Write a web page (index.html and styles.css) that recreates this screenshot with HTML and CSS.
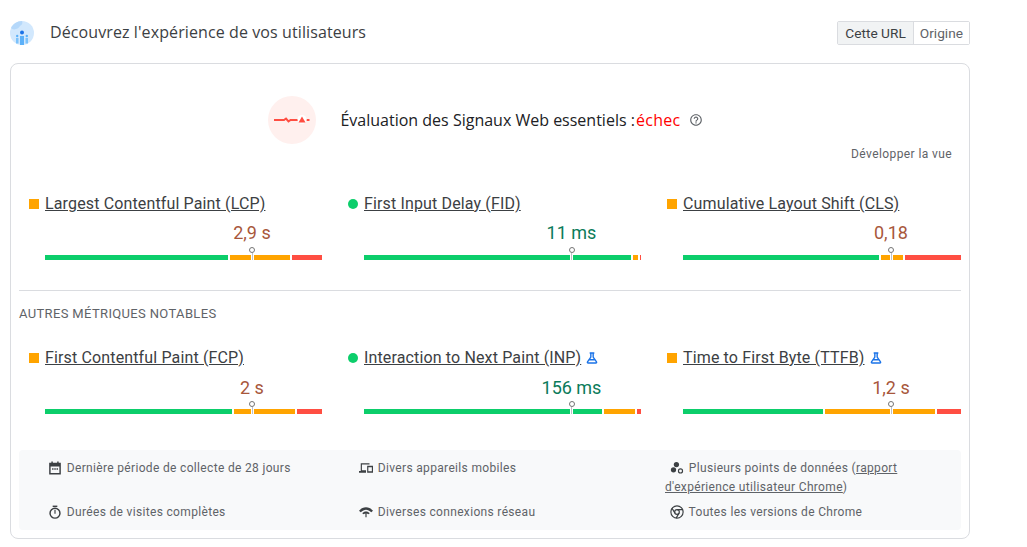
FILE: index.html
```html
<!doctype html>
<html lang="en">
    <head>
        <meta charset="UTF-8" />
        <meta name="viewport" content="width=device-width, initial-scale=1.0" />
        <title>Découvrez l'expérience de vos utilisateurs</title>
        <link rel="stylesheet" href="styles.css">
    </head>
    <body>
        <div class="container">
            <div class="header">
                <div class="header-title">
                    <svg class="logo" viewBox="0 0 24 24">
                        <circle cx="12" cy="12" r="12" fill="#d2e8fd" />
                        <path d="M1 7C3 3 7 0 12 0c1 2 0 4-2 5-1 2-3 3-4 3-2 1-4 0-5-1z" fill="#b5d8fa" />
                        <circle cx="12" cy="11.500" r="2" fill="#1a73e8" />
                        <rect x="10" y="15" width="4" height="9" fill="#5cb1f9" />
                        <rect x="6" y="17" width="2.500" height="5.500" fill="#7cc2fb" />
                        <rect x="15.500" y="17" width="2.500" height="5.500" fill="#7cc2fb" />
                        <circle cx="7.200" cy="15" r="1.200" fill="#5cb1f9" />
                        <circle cx="16.800" cy="15" r="1.200" fill="#5cb1f9" />
                    </svg>
                    <h1>Découvrez l'expérience de vos utilisateurs</h1>
                </div>
                <div class="toggle">
                    <button class="active">Cette URL</button>
                    <button>Origine</button>
                </div>
            </div>

            <div class="card">
                <div class="verdict">
                    <svg class="verdict-icon" viewBox="0 0 48 48">
                        <circle cx="24" cy="24" r="24" fill="#fff0ee" />
                        <path d="M6 24h10l2-1.500 2.500 3 2-1.500h8.500M38.500 24h3" fill="none" stroke="#ff4e42" stroke-width="2" />
                        <circle cx="34" cy="23.500" r="4.500" fill="#fff" />
                        <path d="M30.500 26.500l3.500-6 3.500 6z" fill="#ff4e42" />
                    </svg>
                    <h2>Évaluation des Signaux Web essentiels :<span class="fail">échec</span></h2>
                    <svg class="help" viewBox="0 0 24 24">
                        <path d="M11 18h2v-2h-2v2zm1-16C6.480 2 2 6.480 2 12s4.480 10 10 10 10-4.480 10-10S17.520 2 12 2zm0 18c-4.410 0-8-3.590-8-8s3.590-8 8-8 8 3.590 8 8-3.590 8-8 8zm0-14c-2.210 0-4 1.790-4 4h2c0-1.100.900-2 2-2s2 .900 2 2c0 2-3 1.750-3 5h2c0-2.250 3-2.500 3-5 0-2.210-1.790-4-4-4z" fill="#5f6368" />
                    </svg>
                </div>
                <div class="expand">Développer la vue</div>

                <div class="metrics">
                    <div class="metric" style="--pos: 0.747">
                        <div class="metric-name"><span class="marker average"></span><a href="#">Largest Contentful Paint (LCP)</a></div>
                        <div class="value average-text">2,9 s</div>
                        <div class="bar">
                            <span class="good" style="flex: 183"></span>
                            <span class="medium" style="flex: 60"></span>
                            <span class="poor" style="flex: 30"></span>
                            <i class="pointer"></i>
                        </div>
                    </div>
                    <div class="metric" style="--pos: 0.749">
                        <div class="metric-name"><span class="marker pass"></span><a href="#">First Input Delay (FID)</a></div>
                        <div class="value pass-text">11 ms</div>
                        <div class="bar">
                            <span class="good" style="flex: 267"></span>
                            <span class="medium" style="flex: 5"></span>
                            <span class="poor" style="flex: 1"></span>
                            <i class="pointer"></i>
                        </div>
                    </div>
                    <div class="metric" style="--pos: 0.748">
                        <div class="metric-name"><span class="marker average"></span><a href="#">Cumulative Layout Shift (CLS)</a></div>
                        <div class="value average-text">0,18</div>
                        <div class="bar">
                            <span class="good" style="flex: 196"></span>
                            <span class="medium" style="flex: 22"></span>
                            <span class="poor" style="flex: 56"></span>
                            <i class="pointer"></i>
                        </div>
                    </div>
                </div>

                <hr />
                <h3>Autres métriques notables</h3>

                <div class="metrics">
                    <div class="metric" style="--pos: 0.747">
                        <div class="metric-name"><span class="marker average"></span><a href="#">First Contentful Paint (FCP)</a></div>
                        <div class="value average-text">2 s</div>
                        <div class="bar">
                            <span class="good" style="flex: 187"></span>
                            <span class="medium" style="flex: 61"></span>
                            <span class="poor" style="flex: 25"></span>
                            <i class="pointer"></i>
                        </div>
                    </div>
                    <div class="metric" style="--pos: 0.749">
                        <div class="metric-name">
                            <span class="marker pass"></span><a href="#">Interaction to Next Paint (INP)</a>
                            <svg class="flask" viewBox="0 0 24 24"><path d="M8 3.500h8M10 3.500v7L4.300 18.600c-.6.900 0 1.900 1 1.900h13.400c1 0 1.600-1 1-1.900L14 10.500v-7M7.500 15h9" fill="none" stroke="#1a73e8" stroke-width="2.400" /></svg>
                        </div>
                        <div class="value pass-text">156 ms</div>
                        <div class="bar">
                            <span class="good" style="flex: 238"></span>
                            <span class="medium" style="flex: 31"></span>
                            <span class="poor" style="flex: 4"></span>
                            <i class="pointer"></i>
                        </div>
                    </div>
                    <div class="metric" style="--pos: 0.748">
                        <div class="metric-name">
                            <span class="marker average"></span><a href="#">Time to First Byte (TTFB)</a>
                            <svg class="flask" viewBox="0 0 24 24"><path d="M8 3.500h8M10 3.500v7L4.300 18.600c-.6.900 0 1.900 1 1.900h13.400c1 0 1.600-1 1-1.900L14 10.500v-7M7.500 15h9" fill="none" stroke="#1a73e8" stroke-width="2.400" /></svg>
                        </div>
                        <div class="value average-text">1,2 s</div>
                        <div class="bar">
                            <span class="good" style="flex: 140"></span>
                            <span class="medium" style="flex: 110"></span>
                            <span class="poor" style="flex: 24"></span>
                            <i class="pointer"></i>
                        </div>
                    </div>
                </div>

                <div class="notes">
                    <div class="note">
                        <svg viewBox="0 0 24 24"><path d="M7 1v3M17 1v3" stroke="#3c4043" stroke-width="2.500" /><path d="M2 3h20v20H2zm2.500 6.500v11h15v-11zM7 12.500h2.500v2.500H7zm3.800 0h2.500v2.500h-2.500zm3.800 0h2.500v2.500h-2.500z" fill="#3c4043" fill-rule="evenodd" /></svg>
                        Dernière période de collecte de 28 jours
                    </div>
                    <div class="note">
                        <svg viewBox="0 0 24 24"><path d="M3 4h15v2H5v10h7v4H0v-3h3zM14 8h10v12H14zm2 2.500v7h6v-7z" fill="#3c4043" fill-rule="evenodd" /></svg>
                        Divers appareils mobiles
                    </div>
                    <div class="note">
                        <svg viewBox="0 0 24 24"><circle cx="11" cy="6" r="4.500" fill="#3c4043" /><circle cx="6" cy="15" r="4.500" fill="#3c4043" /><circle cx="18" cy="17" r="3.500" fill="none" stroke="#3c4043" stroke-width="2" /></svg>
                        Plusieurs points de données (<a href="#">rapport</a><br /><a href="#">d'expérience utilisateur Chrome</a>)
                    </div>
                    <div class="note">
                        <svg viewBox="0 0 24 24"><path d="M8 1h8v2.500H8z" fill="#3c4043" /><circle cx="12" cy="14" r="8.500" fill="none" stroke="#3c4043" stroke-width="2.500" /><path d="M11 8h2v7h-2z" fill="#3c4043" /></svg>
                        Durées de visites complètes
                    </div>
                    <div class="note">
                        <svg viewBox="0 0 24 24"><path d="M0 10C3 6 7 4 12 4s9 2 12 6l-3 2.500C18 9.500 15 8 12 8s-6 1.500-9 4.500z" fill="#3c4043" /><path d="M5.500 14c2-1.800 4-2.700 6.500-2.700s4.500.9 6.500 2.700l-2.500 2c-1-.8-2-1.300-3-1.400V21h-2v-6.400c-1 .1-2 .6-3 1.400z" fill="#3c4043" /></svg>
                        Diverses connexions réseau
                    </div>
                    <div class="note">
                        <svg viewBox="0 0 24 24"><circle cx="12" cy="12" r="10.500" fill="none" stroke="#3c4043" stroke-width="2" /><circle cx="12" cy="12" r="4" fill="none" stroke="#3c4043" stroke-width="2" /><path d="M12 8h10M8.500 14L3.400 5.500M15.500 14l-5 8.500" fill="none" stroke="#3c4043" stroke-width="2" /></svg>
                        Toutes les versions de Chrome
                    </div>
                </div>
            </div>
        </div>
    </body>
</html>
```

FILE: styles.css
```css
body {
    font-family: "Roboto", sans-serif;
    background-color: #fff;
    margin: 0;
    padding: 21px 0 8px 10px;
    color: #3c4043;
}

.container {
    width: 960px;
}

.header {
    display: flex;
    justify-content: space-between;
    align-items: center;
    margin-bottom: 18px;
}

.header-title {
    display: flex;
    align-items: center;
    gap: 16px;
}

.logo {
    width: 24px;
    height: 24px;
}

h1 {
    margin: 0 0 2px;
    font-family: "Open Sans", sans-serif;
    font-size: 16px;
    font-weight: 500;
    letter-spacing: 0.1px;
    color: #3c4043;
}

.toggle {
    display: flex;
    height: 24px;
    box-sizing: border-box;
    border: 1px solid #dadce0;
    border-radius: 2px;
}

.toggle button {
    border: none;
    background: #fff;
    padding: 0 6px;
    font-family: "Roboto", sans-serif;
    font-size: 13.7px;
    color: #5f6368;
}

.toggle button.active {
    padding: 0 7px;
    background-color: #f1f3f4;
    color: #3c4043;
    border-right: 1px solid #dadce0;
}

.card {
    box-sizing: border-box;
    height: 476px;
    padding: 32px 8px 0;
    border: 1px solid #dadce0;
    border-radius: 8px;
}

.verdict {
    display: flex;
    justify-content: center;
    align-items: center;
    padding-right: 9px;
}

.verdict-icon {
    width: 48px;
    height: 48px;
    margin-right: 24px;
}

h2 {
    margin: 0 0 1px;
    font-family: "Open Sans", sans-serif;
    font-size: 16px;
    font-weight: 500;
    color: #202124;
}

.fail {
    margin-left: 1px;
    letter-spacing: 0.3px;
    color: #f00;
}

.help {
    width: 14px;
    height: 14px;
    margin-left: 8px;
}

.expand {
    margin-top: 2px;
    padding-right: 9px;
    text-align: right;
    font-size: 12px;
    line-height: 16px;
    letter-spacing: 0.4px;
    color: #5f6368;
}

.metrics {
    display: grid;
    grid-template-columns: 303px 303px 304px;
    column-gap: 16px;
    margin-top: 30px;
}

.metric-name {
    display: flex;
    align-items: center;
    padding-left: 10px;
    font-size: 16px;
    line-height: 24px;
    letter-spacing: 0.14px;
}

.metric-name a {
    color: #3c4043;
}

.marker {
    width: 10px;
    height: 10px;
    margin-right: 6px;
}

.marker.average {
    background-color: #ffa400;
}

.marker.pass {
    background-color: #0cce6b;
    border-radius: 50%;
}

.flask {
    width: 14px;
    height: 14px;
    margin-left: 4px;
}

.value {
    width: fit-content;
    margin: 5px 0 0 calc(26px + (100% - 26px) * var(--pos));
    transform: translateX(-50%);
    font-size: 18px;
    line-height: 24px;
}

h3 + .metrics .value {
    margin-top: 6px;
}

.average-text {
    color: #a8573b;
}

.pass-text {
    color: #0b7b5a;
}

.bar {
    position: relative;
    display: flex;
    gap: 2px;
    height: 5px;
    margin: 10px 0 0 26px;
}

h3 + .metrics .bar {
    margin-top: 9px;
}

.good {
    background-color: #0cce6b;
}

.medium {
    background-color: #ffa400;
}

.poor {
    background-color: #ff4e42;
}

.pointer {
    position: absolute;
    left: calc(var(--pos) * 100%);
    top: -2px;
    width: 3px;
    height: 7px;
    margin-left: -1px;
    background: linear-gradient(to right, #fff 0, #fff 33%, #bdc1c6 33%, #bdc1c6 66%, #fff 66%);
}

.pointer::before {
    content: "";
    position: absolute;
    left: -1.5px;
    top: -6px;
    box-sizing: border-box;
    width: 6px;
    height: 6px;
    background: #fff;
    border: 1px solid #757575;
    border-radius: 50%;
}

hr {
    height: 1px;
    margin: 30px 0 0;
    border: none;
    background-color: #dadce0;
}

h3 {
    margin: 15px 0 0;
    font-size: 13px;
    font-weight: 400;
    line-height: 16px;
    letter-spacing: 0.35px;
    text-transform: uppercase;
    color: #5f6368;
}

h3 + .metrics {
    margin-top: 24px;
}

.notes {
    display: grid;
    grid-template-columns: 311px 311px 1fr;
    row-gap: 6px;
    margin-top: 36px;
    padding: 9px 24px 8px;
    background-color: #f8f9fa;
    border-radius: 4px;
    font-size: 12px;
    line-height: 19px;
    letter-spacing: 0.33px;
    color: #5f6368;
}

.note a {
    color: #5f6368;
}

.note svg {
    width: 14px;
    height: 14px;
    margin: 0 1.5px 0 5px;
    vertical-align: -3px;
}
```
